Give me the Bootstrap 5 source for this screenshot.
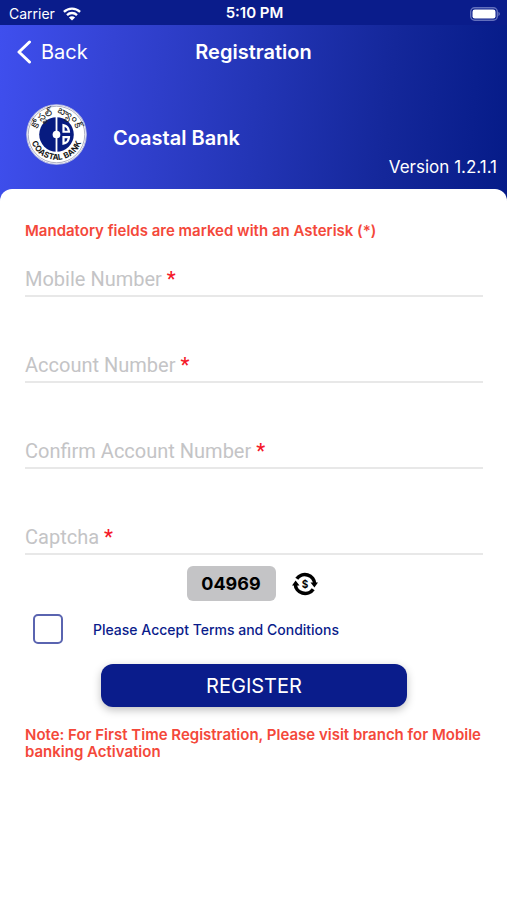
<!DOCTYPE html>
<html lang="en">
<head>
<meta charset="utf-8">
<meta name="viewport" content="width=device-width, initial-scale=1">
<title>Registration – Coastal Bank</title>
<link href="https://cdn.jsdelivr.net/npm/bootstrap@5.3.0/dist/css/bootstrap.min.css" rel="stylesheet">
<style>
  :root { --navy: #0a1c8b; --alert: #f4483a; }
  body { font-family: Inter, "Liberation Sans", sans-serif; background: #fff; }
  .status { background: var(--navy); height: 25px; font-size: 14px; padding: 2px 7px 0 9px; }
  .status-time { font-size: 15px; }
  .masthead { background: linear-gradient(95deg, #3f4fee 0%, #3443d4 22%, #2335b6 50%, #14279a 76%, #051b88 100%); padding-bottom: 22px; }
  .bar { height: 54px; padding: 0 16px; }
  .back { font-size: 20px; gap: 9px; }
  .page-title { font-size: 20px; }
  .brand { padding: 24px 26px 0; gap: 26px; height: 86px; }
  .brand-name { font-size: 20px; padding-top: 7px; }
  .version { font-size: 17px; line-height: 24px; padding-right: 10px; margin-top: -10px; }
  .sheet { border-radius: 12px 12px 0 0; margin-top: -12px; padding: 33px 24px 24px 25px; }
  .alert-text { color: var(--alert); font-size: 15px; line-height: 17px; }
  .intro { margin-bottom: 24px; }
  .field { height: 34px; border-bottom: 2px solid #e8e8e8; margin-bottom: 52px; font-family: Roboto, "Liberation Sans", sans-serif; font-size: 20px; }
  .field label { color: #c4c4c6; white-space: nowrap; }
  .field label span { color: #f5192a; font-weight: 500; }
  .field input { min-width: 0; width: 0; outline: 0; }
  .field.last { margin-bottom: 11px; }
  .captcha { gap: 16px; padding-right: 4px; }
  .code { background: #c4c4c6; border-radius: 6px; width: 89px; height: 35px; font-size: 18px; line-height: 35px; }
  .terms { gap: 30px; padding-left: 8px; margin-top: 13px; color: var(--navy); font-size: 14px; font-weight: 500; }
  .terms .form-check-input { width: 30px; height: 30px; border: 2px solid #5a64b0; border-radius: 5px; }
  .register { background: var(--navy); color: #fff; width: 67%; height: 43px; border-radius: 12px; font-size: 20px; margin: 20px 0 19px; padding: 0; box-shadow: 0 3px 8px rgba(0,0,0,.25); }
  .register:hover { background: #142aa8; color: #fff; }
</style>
</head>
<body>
<div class="status d-flex align-items-center justify-content-between text-white">
  <div class="col d-flex align-items-center gap-2">
    <span>Carrier</span>
    <svg width="18" height="14" viewBox="0 0 18 14" fill="none" stroke="#fff" stroke-width="2.3" aria-hidden="true"><path d="M.9 4.9C5.500.4 12.500.4 17.100 4.900"/><path d="M4 8.100C6.900 5.300 11.100 5.300 14 8.100"/><path d="M9 13.600 5.900 10.500C7.700 8.900 10.300 8.900 12.100 10.500Z" fill="#fff" stroke="none"/></svg>
  </div>
  <div class="status-time fw-semibold">5:10 PM</div>
  <div class="col d-flex justify-content-end">
    <svg width="30" height="14" viewBox="0 0 30 14" aria-hidden="true"><rect x=".7" y=".7" width="26.600" height="12.600" rx="4" fill="none" stroke="#6370bd" stroke-width="1.400"/><rect x="2.500" y="2.500" width="23" height="9" rx="2.300" fill="#fff"/><path d="M28.500 4.800Q31 7 28.500 9.200Z" fill="#7d88c9"/></svg>
  </div>
</div>

<header class="masthead text-white">
  <nav class="bar d-flex align-items-center">
    <div class="col d-flex"><a href="#" class="back d-inline-flex align-items-center text-white text-decoration-none"><svg width="16" height="24" viewBox="0 0 16 24" fill="none" stroke="#fff" stroke-width="3" stroke-linecap="round" stroke-linejoin="round" aria-hidden="true"><path d="M13.500 2 3 12l10.500 10"/></svg>Back</a></div>
    <h1 class="page-title fw-semibold m-0">Registration</h1>
    <div class="col"></div>
  </nav>
  <div class="brand d-flex align-items-center">
    <svg class="flex-shrink-0" width="61" height="61" viewBox="0 0 60 60" role="img" aria-label="Coastal Bank logo">
      <defs><path id="arcTop" d="M10.500 30a19.500 19.500 0 0 1 39 0"/><path id="arcBottom" d="M4 29a26 26 0 0 0 52 0"/></defs>
      <circle cx="30" cy="30" r="29.300" fill="#fff" stroke="#b9bddf" stroke-width="1"/>
      <circle cx="30" cy="30" r="27.800" fill="none" stroke="#8d90a8" stroke-width=".7"/>
      <circle cx="30" cy="30" r="17" fill="#071b80"/>
      <path d="M30 12.500v35" stroke="#fff" stroke-width="1.800"/>
      <circle cx="30" cy="30" r="3.800" fill="#fff"/>
      <path d="M35.800 19.500c5 .8 7.600 3.600 7.600 8.800h-7.600ZM35.800 31.500h7.600c0 5.200-2.600 8-7.600 8.800Z" fill="#fff"/>
      <path d="M38 26.200v-3.800q2.600 1 3 3.800ZM38 33.600v3.800q2.600-1 3-3.800Z" fill="#071b80"/>
      <text font-size="10" font-weight="500" fill="#222" text-anchor="middle"><textPath href="#arcTop" startOffset="50%">కోస్టల్ బ్యాంక్</textPath></text>
      <text font-family="Inter" font-size="8" font-weight="700" fill="#181818" text-anchor="middle"><textPath href="#arcBottom" startOffset="50%">COASTAL BANK</textPath></text>
    </svg>
    <div class="brand-name fw-semibold">Coastal Bank</div>
  </div>
  <div class="version text-end">Version 1.2.1.1</div>
</header>

<main class="sheet bg-white position-relative">
  <form>
    <p class="alert-text intro fw-semibold">Mandatory fields are marked with an Asterisk (*)</p>
    <div class="field d-flex align-items-center"><label for="mobile">Mobile Number <span>*</span></label><input id="mobile" type="tel" class="border-0 bg-transparent flex-fill" required></div>
    <div class="field d-flex align-items-center"><label for="account">Account Number <span>*</span></label><input id="account" type="text" class="border-0 bg-transparent flex-fill" required></div>
    <div class="field d-flex align-items-center"><label for="confirm">Confirm Account Number <span>*</span></label><input id="confirm" type="text" class="border-0 bg-transparent flex-fill" required></div>
    <div class="field last d-flex align-items-center"><label for="captcha">Captcha <span>*</span></label><input id="captcha" type="text" class="border-0 bg-transparent flex-fill" required></div>

    <div class="captcha d-flex align-items-center justify-content-center">
      <output class="code text-center fw-bold text-black" for="captcha">04969</output>
      <button type="button" class="btn p-0 border-0 d-flex" aria-label="Refresh captcha">
        <svg width="26" height="26" viewBox="0 0 26 26" aria-hidden="true"><g fill="none" stroke="#000" stroke-width="3.600"><path d="M4.800 7.800A9.800 9.800 0 0 1 22.700 13"/><path d="M21.200 18.200A9.800 9.800 0 0 1 3.300 13"/></g><path d="M0 14.500 3.600 9.500 7.500 14.500ZM26 11.500 22.400 16.500 18.500 11.500Z"/><text x="13" y="16.600" text-anchor="middle" font-family="Inter" font-weight="700" font-size="10">$</text></svg>
      </button>
    </div>

    <div class="terms d-flex align-items-center">
      <input class="form-check-input m-0 flex-shrink-0" type="checkbox" id="terms">
      <label for="terms">Please Accept Terms and Conditions</label>
    </div>
    <div class="text-center"><button type="submit" class="register btn border-0">REGISTER</button></div>
    <p class="alert-text fw-semibold m-0">Note: For First Time Registration, Please visit branch for Mobile banking Activation</p>
  </form>
</main>
<script src="https://cdn.jsdelivr.net/npm/bootstrap@5.3.0/dist/js/bootstrap.bundle.min.js"></script>
</body>
</html>
